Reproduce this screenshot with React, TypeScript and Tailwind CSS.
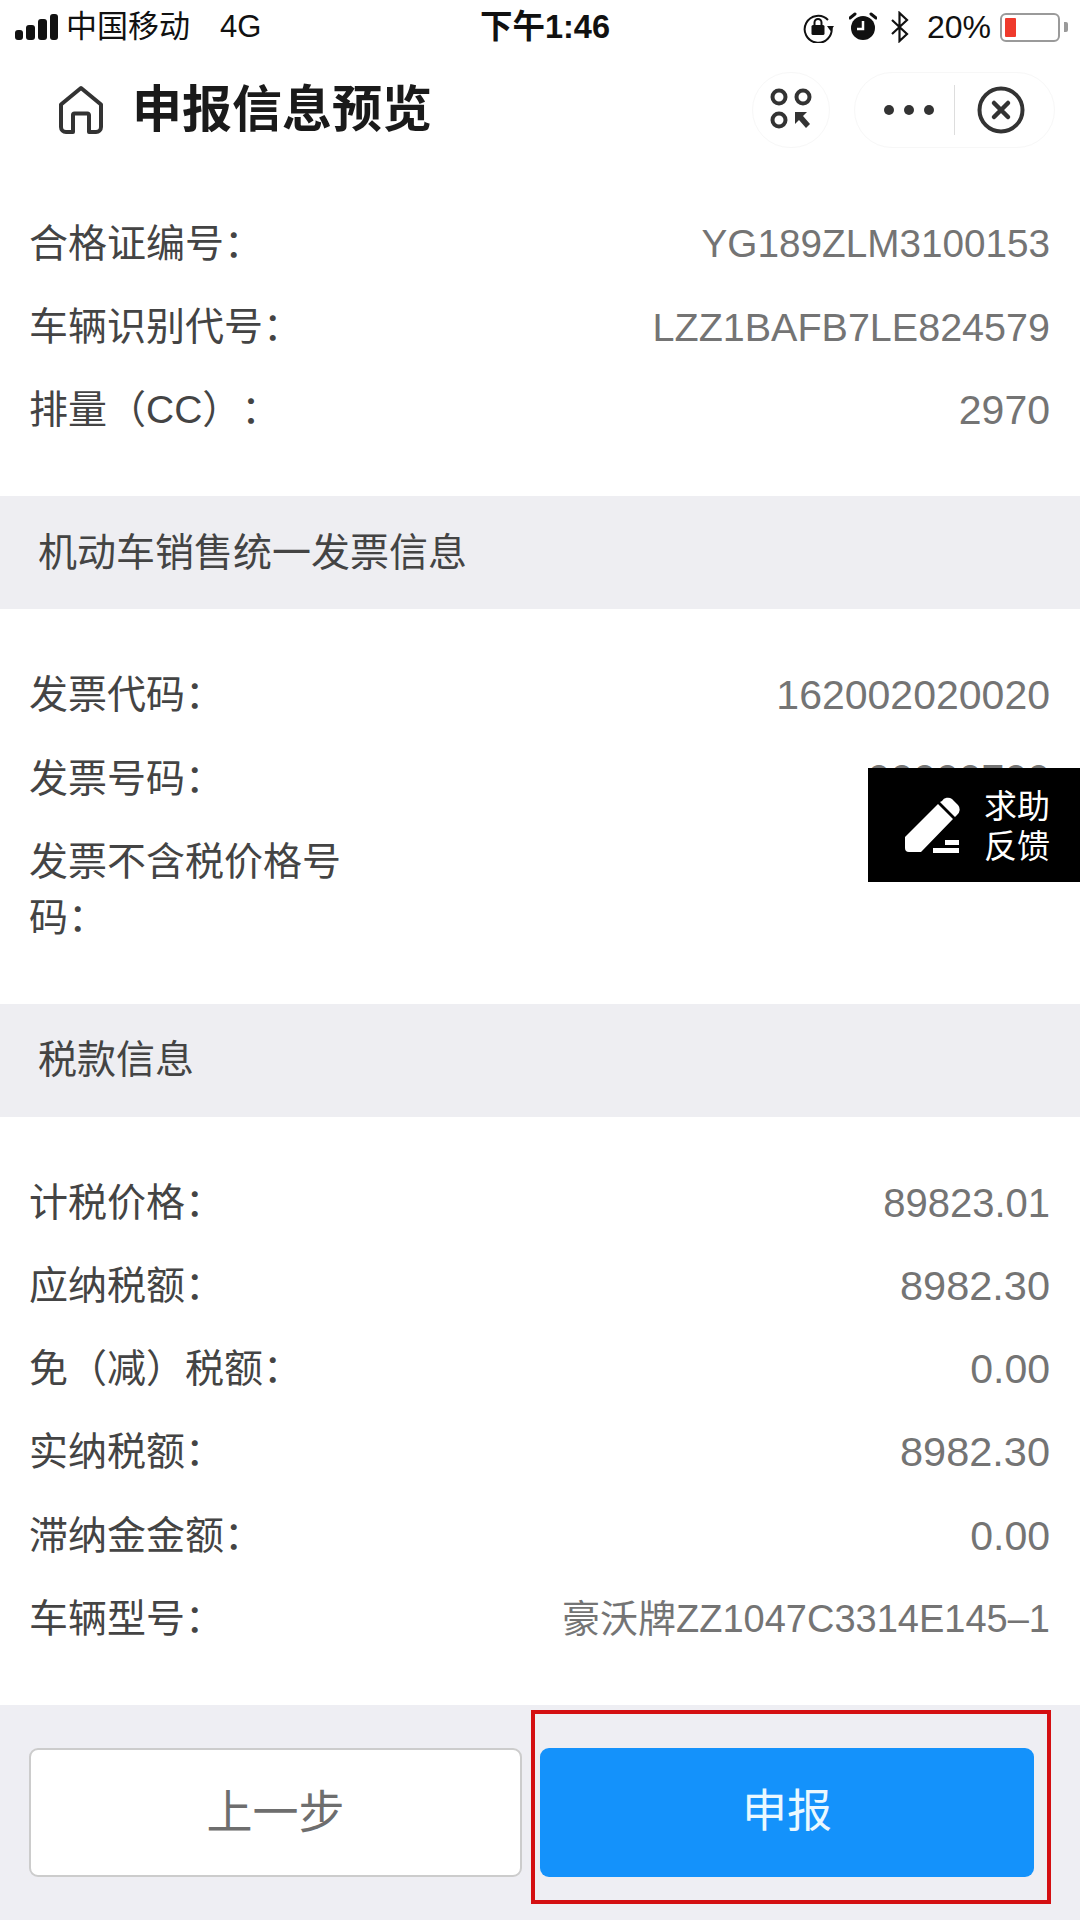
const font = "font-['Liberation_Sans','Noto_Sans_CJK_SC',sans-serif]";

type Row = { label: string; value?: string; size?: string };

const top: Row[] = [
  { label: "合格证编号：", value: "YG189ZLM3100153", size: "text-[38.700px]" },
  { label: "车辆识别代号：", value: "LZZ1BAFB7LE824579", size: "text-[39.500px]" },
  { label: "排量（CC）：", value: "2970" },
];

const invoice: Row[] = [
  { label: "发票代码：", value: "162002020020" },
  { label: "发票号码：", value: "00000700" },
  { label: "发票不含税价格号码：" },
];

const tax: Row[] = [
  { label: "计税价格：", value: "89823.01", size: "text-[40px]" },
  { label: "应纳税额：", value: "8982.30", size: "text-[41.500px]" },
  { label: "免（减）税额：", value: "0.00" },
  { label: "实纳税额：", value: "8982.30", size: "text-[41.500px]" },
  { label: "滞纳金金额：", value: "0.00" },
  { label: "车辆型号：", value: "豪沃牌ZZ1047C3314E145–1", size: "text-[38px]" },
];

function Rows({ rows }: { rows: Row[] }) {
  return (
    <div className="flex flex-col gap-[27.200px] py-[58px] pl-[29px] pr-[30px]">
      {rows.map((r) => (
        <div
          key={r.label}
          className="flex justify-between text-[39px] leading-[56px] [text-spacing-trim:space-all]"
        >
          <div className="w-[320px] text-[#444444] break-all">{r.label}</div>
          {r.value && (
            <div className={`${r.size ?? "text-[41px]"} text-[#747474] whitespace-nowrap`}>{r.value}</div>
          )}
        </div>
      ))}
    </div>
  );
}

function SectionTitle({ children }: { children: string }) {
  return (
    <div className="h-[113px] bg-[#eeeef2] pl-[38px] flex items-center text-[39px] text-[#444444]">
      {children}
    </div>
  );
}

function StatusBar() {
  return (
    <div className="h-[54px] pl-[15px] pr-[12px] flex items-center text-[#111111]">
      <div className="flex-1 flex items-center">
        <div className="flex items-end gap-[3px] h-[26px]">
          <div className="w-[8px] h-[10px] rounded-[3px] bg-[#111111]" />
          <div className="w-[9px] h-[15px] rounded-[3px] bg-[#111111]" />
          <div className="w-[9px] h-[21px] rounded-[3px] bg-[#111111]" />
          <div className="w-[8px] h-[26px] rounded-[3px] bg-[#111111]" />
        </div>
        <span className="ml-[8px] text-[31px]">中国移动</span>
        <span className="ml-[30px] text-[31px]">4G</span>
      </div>
      <div className="pl-[7px] text-[32.500px] font-semibold">下午1:46</div>
      <div className="flex-1 flex items-center justify-end">
        <svg width="32" height="32" viewBox="0 0 32 32" className="mr-[15px]">
          <path d="M26 9A13.500 13.500 0 1 0 29.500 16" fill="none" stroke="#111" strokeWidth="2" />
          <path d="M25 15h7l-3.500 5z" fill="#111" />
          <rect x="9.500" y="14" width="13" height="10" rx="1.500" fill="#111" />
          <path d="M12.500 14v-2.500a3.500 3.500 0 0 1 7 0V14" fill="none" stroke="#111" strokeWidth="2" />
        </svg>
        <svg width="28" height="30" viewBox="0 0 28 30" className="mr-[13px]">
          <circle cx="14" cy="16" r="12" fill="#111" />
          <path d="M14 9v8H8" fill="none" stroke="#fff" strokeWidth="2.500" />
          <path d="M1 6l5-4M27 6l-5-4" stroke="#111" strokeWidth="3" strokeLinecap="round" />
        </svg>
        <svg width="20" height="32" viewBox="0 0 20 32" className="mr-[17px]">
          <path d="M2 9l15 14-7.500 7V2L17 9 2 23" fill="none" stroke="#111" strokeWidth="2.200" />
        </svg>
        <span className="text-[32px]">20%</span>
        <div className="ml-[9px] w-[60px] h-[29px] border-[2px] border-[#9a9a9a] rounded-[6px] p-[3px] bg-white">
          <div className="w-[11px] h-full bg-[#ef3a2c] rounded-[1px]" />
        </div>
        <div className="ml-[4px] w-[4px] h-[10px] bg-[#9a9a9a] rounded-r-[2px]" />
      </div>
    </div>
  );
}

function NavBar() {
  return (
    <div className="h-[104px] pt-[8px] pl-[58px] pr-[25px] flex items-center">
      <svg width="46" height="50" viewBox="0 0 46 50" className="shrink-0">
        <path
          d="M23 3L43 19.500V42a5 5 0 0 1-5 5H31V30a1.500 1.500 0 0 0-1.500-1.500h-13A1.500 1.500 0 0 0 15 30V47H8a5 5 0 0 1-5-5V19.500z"
          fill="none"
          stroke="#333333"
          strokeWidth="4"
          strokeLinejoin="round"
        />
      </svg>
      <div className="ml-[28px] text-[50px] font-bold text-[#1a1a1a]">申报信息预览</div>
      <div className="ml-auto w-[78px] h-[76px] rounded-full border border-[#f7f7f7] flex items-center justify-center">
        <svg width="44" height="44" viewBox="0 0 44 44" className="-mt-[2px]">
          <circle cx="10" cy="10" r="6.500" fill="none" stroke="#333" strokeWidth="4" />
          <circle cx="34" cy="10" r="6.500" fill="none" stroke="#333" strokeWidth="4" />
          <circle cx="10" cy="33" r="6.500" fill="none" stroke="#333" strokeWidth="4" />
          <path d="M26 25h12l-4 4 7 8-4 4-7-8-4 4z" fill="#333" />
        </svg>
      </div>
      <div className="ml-[24px] w-[201px] h-[76px] rounded-full border border-[#f7f7f7] flex items-center">
        <div className="w-[99px] pl-[8px] flex justify-center gap-[10px]">
          <div className="w-[10px] h-[10px] rounded-full bg-[#333333]" />
          <div className="w-[10px] h-[10px] rounded-full bg-[#333333]" />
          <div className="w-[10px] h-[10px] rounded-full bg-[#333333]" />
        </div>
        <div className="w-px h-[50px] bg-[#dddddd]" />
        <div className="flex-1 pr-[8px] flex justify-center">
          <svg width="48" height="48" viewBox="0 0 48 48">
            <circle cx="24" cy="24" r="21.500" fill="none" stroke="#333" strokeWidth="4" />
            <path d="M17 17l14 14M31 17L17 31" stroke="#333" strokeWidth="4.500" strokeLinecap="round" />
          </svg>
        </div>
      </div>
    </div>
  );
}

export default function App() {
  return (
    <div className={`relative w-[1080px] h-[1920px] overflow-hidden bg-white flex flex-col ${font}`}>
      <StatusBar />
      <NavBar />
      <Rows rows={top} />
      <SectionTitle>机动车销售统一发票信息</SectionTitle>
      <Rows rows={invoice} />
      <SectionTitle>税款信息</SectionTitle>
      <Rows rows={tax} />

      <div className="relative flex-1 bg-[#eeeef3] pt-[43px] pl-[29px] flex gap-[18px]">
        <div className="w-[493px] h-[129px] bg-white border-[2px] border-[#cccccc] rounded-[9px] flex items-center justify-center text-[46px] text-[#6e6e6e]">
          上一步
        </div>
        <div className="w-[494px] h-[129px] bg-[#1492fb] rounded-[9px] flex items-center justify-center text-[45px] text-[#eaf8ff]">
          申报
        </div>
        <div className="absolute left-[531px] top-[5px] w-[520px] h-[194px] border-[4px] border-[#d40f12]" />
      </div>

      <div className="absolute left-[868px] top-[768px] w-[212px] h-[114px] bg-black flex items-center text-white">
        <svg width="58" height="58" viewBox="0 0 58 58" className="ml-[35px] shrink-0">
          <path
            d="M2 41L35 8l15 15-32 33H6a4 4 0 0 1-4-4z M39 5a7 7 0 0 1 10-2l6 6a7 7 0 0 1-1 10l-2 2-15-15z"
            fill="#ffffff"
          />
          <path d="M42 44h14v5H42zM30 52h26v5H30z" fill="#ffffff" />
        </svg>
        <div className="ml-[23px] pt-[4px] text-[33px] leading-[40px] w-[68px]">求助 反馈</div>
      </div>
    </div>
  );
}
